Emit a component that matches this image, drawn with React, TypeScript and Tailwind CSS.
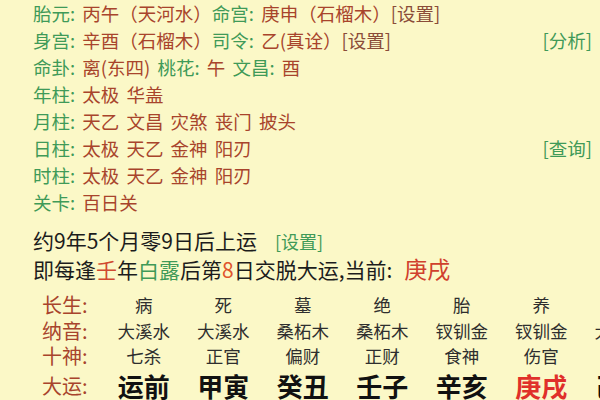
import React from 'react';

const green = 'text-[#3f9a58]';
const red = 'text-[#a8442c]';

type Seg = { t: string; c?: 'g' | 'r' | 'b' };

const topRows: { label: string; parts: Seg[]; right?: string }[] = [
  {
    label: '胎元',
    parts: [
      { t: '丙午（天河水）' },
      { t: '命宫: ', c: 'g' },
      { t: '庚申（石榴木）' },
      { t: '[设置]', c: 'b' },
    ],
  },
  {
    label: '身宫',
    parts: [
      { t: '辛酉（石榴木）' },
      { t: '司令: ', c: 'g' },
      { t: '乙(真诠）' },
      { t: '[设置]', c: 'b' },
    ],
    right: '[分析]',
  },
  {
    label: '命卦',
    parts: [
      { t: '离(东四) ' },
      { t: '桃花: ', c: 'g' },
      { t: '午 ' },
      { t: '文昌: ', c: 'g' },
      { t: '酉' },
    ],
  },
  { label: '年柱', parts: [{ t: '太极 华盖' }] },
  { label: '月柱', parts: [{ t: '天乙 文昌 灾煞 丧门 披头' }] },
  { label: '日柱', parts: [{ t: '太极 天乙 金神 阳刃' }], right: '[查询]' },
  { label: '时柱', parts: [{ t: '太极 天乙 金神 阳刃' }] },
  { label: '关卡', parts: [{ t: '百日关' }] },
];

const table = [
  { label: '长生', cells: ['病', '死', '墓', '绝', '胎', '养', ''] },
  { label: '纳音', cells: ['大溪水', '大溪水', '桑柘木', '桑柘木', '钗钏金', '钗钏金', '大驿土'] },
  { label: '十神', cells: ['七杀', '正官', '偏财', '正财', '食神', '伤官', ''] },
];

const yun = ['运前', '甲寅', '癸丑', '壬子', '辛亥', '庚戌', '己酉'];

export default function App() {
  return (
    <div
      className="w-[600px] h-[400px] overflow-hidden bg-[#fbf8c7] whitespace-pre"
      style={{ fontFamily: '"Noto Sans CJK SC", "Noto Sans", sans-serif' }}
    >
      {/* 命盘信息 */}
      <div className="pl-[33px] pr-[8px] text-[18.5px] leading-[27px] [word-spacing:3px]">
        {topRows.map((row) => (
          <div key={row.label} className="flex items-center h-[27px]">
            <span>
              <span className={green}>{row.label}: </span>
              {row.parts.map((p, i) => (
                <span
                  key={i}
                  className={p.c === 'g' ? green : p.c === 'b' ? 'text-[#8a4c38]' : red}
                >
                  {p.t}
                </span>
              ))}
            </span>
            {row.right && <span className={`ml-auto ${green}`}>{row.right}</span>}
          </div>
        ))}
      </div>

      {/* 起运 */}
      <div className="pl-[33px] mt-[10px] text-[21px] leading-[29px] text-[#1c1c1c]">
        <div className="h-[29px]">
          约9年5个月零9日后上运<span className={`ml-[18px] text-[18px] leading-none ${green}`}>[设置]</span>
        </div>
        <div className="h-[29px]">
          即每逢<span className="text-[#d0492f]">壬</span>年<span className="text-[#3f9a58]">白露</span>后第<span className="text-[#e0552c]">8</span>日交脱大运,当前:<span className="ml-[12px] text-[23px] leading-none text-[#d0402c]">庚戌</span>
        </div>
      </div>

      {/* 大运表 */}
      <div className="pl-[42px] mt-[8px]">
        {table.map((row) => (
          <div key={row.label} className="flex items-center h-[25.5px]">
            <span className={`w-[62px] shrink-0 text-[20px] leading-[25px] ${red}`}>{row.label}:</span>
            {row.cells.map((c, i) => (
              <span
                key={i}
                className="w-[79.5px] shrink-0 text-center text-[17.5px] leading-[25px] text-[#2e2e2e]"
              >
                {c}
              </span>
            ))}
          </div>
        ))}
        <div className="flex items-center h-[35px]">
          <span className={`w-[62px] shrink-0 text-[20px] leading-[26px] ${red}`}>大运:</span>
          {yun.map((c) => (
            <span
              key={c}
              className={`w-[79.5px] shrink-0 text-center text-[26px] leading-[26px] font-bold ${
                c === '庚戌' ? 'text-[#e0302a]' : 'text-[#111]'
              }`}
            >
              {c}
            </span>
          ))}
        </div>
      </div>
    </div>
  );
}
